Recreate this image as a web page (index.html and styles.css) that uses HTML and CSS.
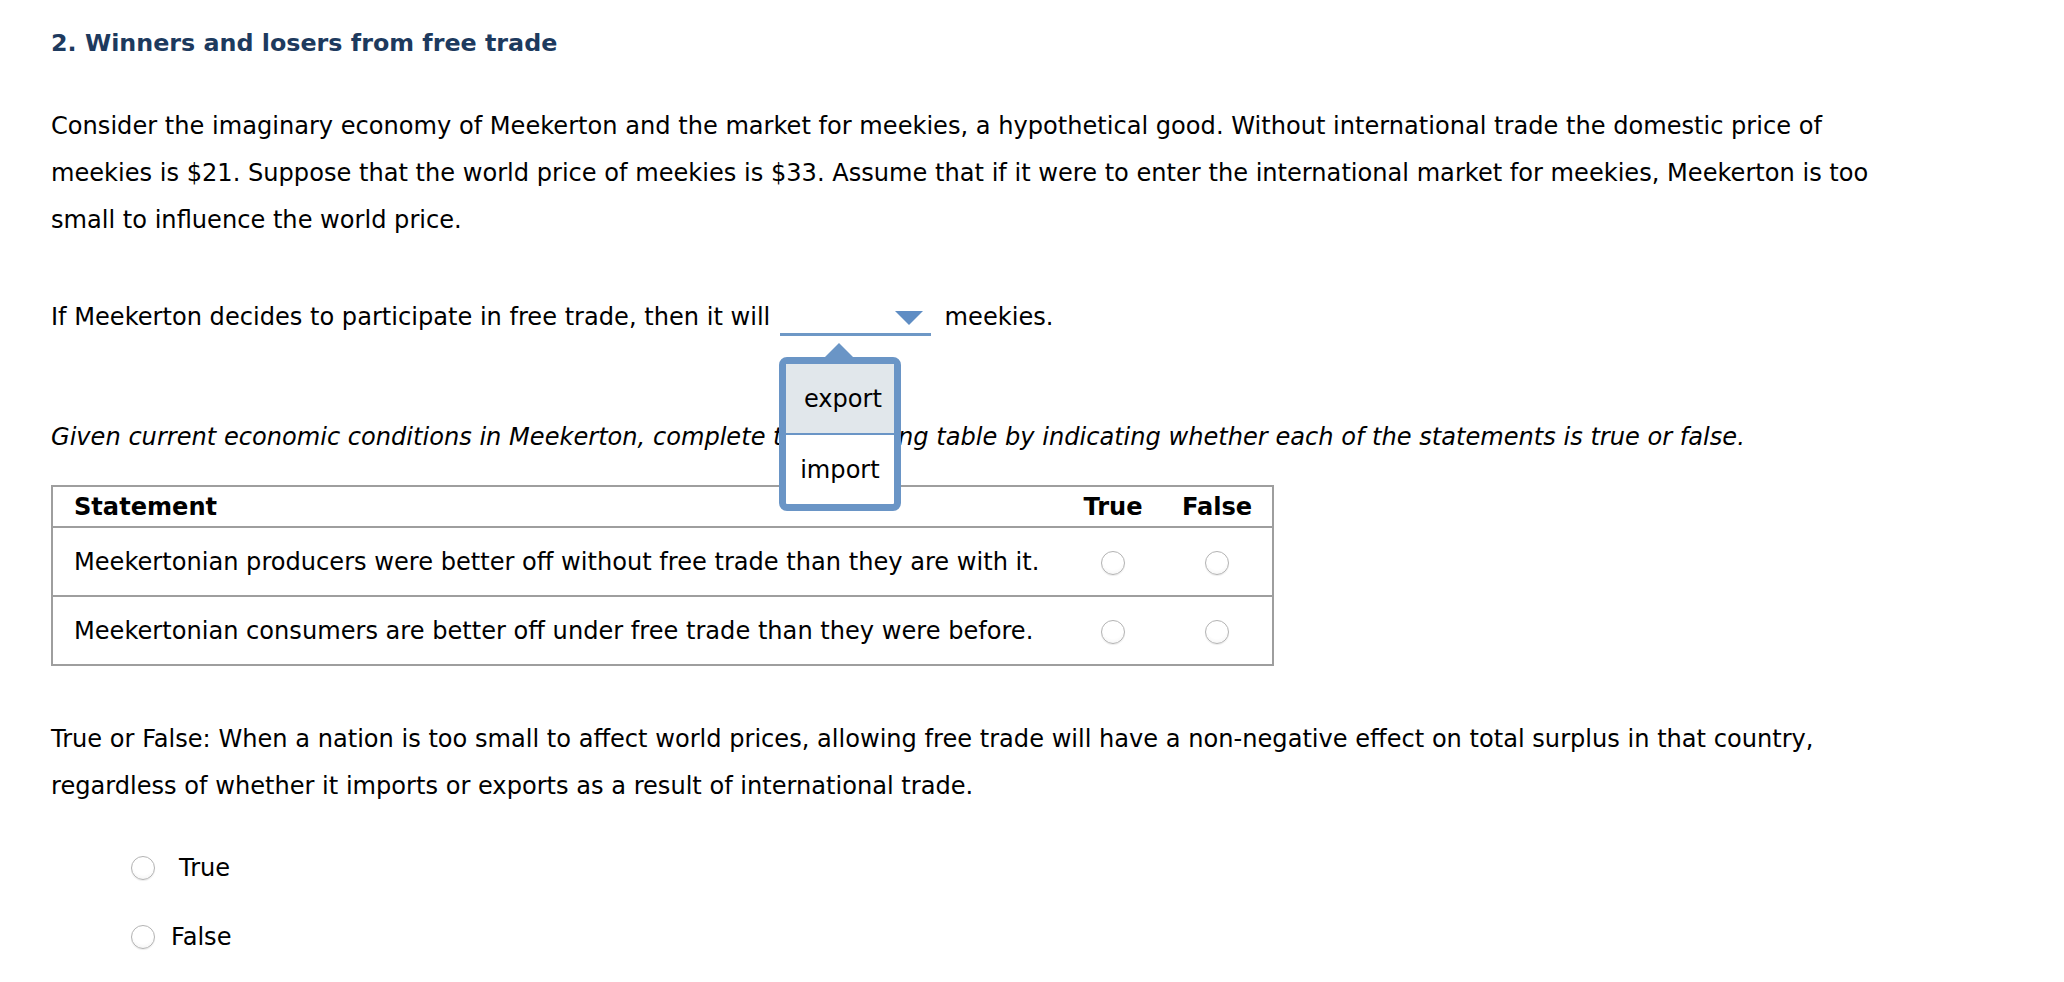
FILE: index.html
```html
<!DOCTYPE html>
<html>
<head>
<meta charset="utf-8">
<link rel="stylesheet" href="styles.css">
</head>
<body>
<div class="page">
  <h2 class="title">2. Winners and losers from free trade</h2>
  <p class="para para--intro">Consider the imaginary economy of Meekerton and the market for meekies, a hypothetical good. Without international trade the domestic price of meekies is $21. Suppose that the world price of meekies is $33. Assume that if it were to enter the international market for meekies, Meekerton is too small to influence the world price.</p>
  <p class="para para--choice">If Meekerton decides to participate in free trade, then it will <span class="dropdown"><span class="dropdown-arrow"></span><span class="menu"><span class="menu-item menu-item--active">export</span><span class="menu-item">import</span></span></span> meekies.</p>
  <p class="para para--italic">Given current economic conditions in Meekerton, complete the following table by indicating whether each of the statements is true or false.</p>
  <table class="grid">
    <thead>
      <tr><th class="col-statement">Statement</th><th class="col-true">True</th><th class="col-false">False</th></tr>
    </thead>
    <tbody>
      <tr><td class="col-statement">Meekertonian producers were better off without free trade than they are with it.</td><td class="col-true"><span class="radio"></span></td><td class="col-false"><span class="radio"></span></td></tr>
      <tr><td class="col-statement">Meekertonian consumers are better off under free trade than they were before.</td><td class="col-true"><span class="radio"></span></td><td class="col-false"><span class="radio"></span></td></tr>
    </tbody>
  </table>
  <p class="para para--tf">True or False: When a nation is too small to affect world prices, allowing free trade will have a non-negative effect on total surplus in that country, regardless of whether it imports or exports as a result of international trade.</p>
  <div class="options">
    <div class="option"><span class="radio"></span><span class="option-label option-label--true">True</span></div>
    <div class="option"><span class="radio"></span><span class="option-label">False</span></div>
  </div>
</div>
</body>
</html>
```
FILE: styles.css
```css
html, body {
  margin: 0;
  padding: 0;
  background: #ffffff;
}
body {
  font-family: "DejaVu Sans", Verdana, sans-serif;
  font-size: 24.1px;
  color: #000000;
}
.page {
  padding: 29px 0 0 51px;
  width: 1845px;
}
.title {
  margin: 0;
  font-size: 23.8px;
  line-height: 28px;
  font-weight: bold;
  color: #1d3a5e;
}
.para {
  margin: 0;
  line-height: 47px;
}
.para--intro {
  margin-top: 46px;
}
.para--choice {
  margin-top: 50px;
}
.para--italic {
  margin-top: 73px;
  font-style: italic;
}
.dropdown {
  position: relative;
  display: inline-flex;
  justify-content: flex-end;
  align-items: flex-start;
  box-sizing: border-box;
  width: 151px;
  height: 28px;
  padding: 3px 8px 0 0;
  margin: 0 6px 0 2px;
  border-bottom: 3px solid #6e98c6;
  vertical-align: baseline;
}
.dropdown-arrow {
  width: 0;
  height: 0;
  border-left: 14px solid transparent;
  border-right: 14px solid transparent;
  border-top: 14px solid #5f8dc4;
}
.menu {
  position: absolute;
  left: -1px;
  top: 49px;
  width: 122px;
  box-sizing: border-box;
  border: 7px solid #6a95c6;
  border-radius: 8px;
  background: #ffffff;
  display: flex;
  flex-direction: column;
  line-height: normal;
  z-index: 2;
}
.menu::before {
  content: "";
  position: absolute;
  top: -21px;
  left: 39px;
  width: 0;
  height: 0;
  border-left: 14px solid transparent;
  border-right: 14px solid transparent;
  border-bottom: 14px solid #6a95c6;
}
.menu-item {
  display: flex;
  align-items: center;
  justify-content: center;
  height: 69px;
  font-style: normal;
}
.menu-item--active {
  background: #e1e7eb;
  border-bottom: 2px solid #6a95c6;
  padding-left: 6px;
}
.grid {
  margin-top: 24px;
  border-collapse: collapse;
  border: 2px solid #9e9e9e;
  width: 1223px;
}
.grid th, .grid td {
  padding: 0;
  text-align: left;
  vertical-align: middle;
}
.grid thead tr {
  height: 41px;
  border-bottom: 2px solid #9e9e9e;
}
.grid tbody tr {
  height: 69px;
  border-bottom: 2px solid #9e9e9e;
}
.grid .col-statement {
  padding-left: 21px;
}
.grid .col-true {
  width: 98px;
  text-align: center;
}
.grid .col-false {
  width: 110px;
  text-align: center;
}
.grid .radio {
  vertical-align: middle;
}
.radio {
  display: inline-block;
  width: 24px;
  height: 24px;
  box-sizing: border-box;
  border-radius: 50%;
  border: 1px solid #b3b3b3;
  background: radial-gradient(circle at 50% 35%, #ffffff 0%, #ffffff 55%, #eeeeee 100%);
  box-shadow: 0 1px 1px rgba(0, 0, 0, 0.08);
}
.para--tf {
  margin-top: 50px;
}
.options {
  margin-top: 34px;
  display: flex;
  flex-direction: column;
  gap: 22px;
  padding-left: 80px;
}
.option {
  display: flex;
  align-items: center;
  height: 47px;
}
.option-label {
  margin-left: 16px;
}
.option-label--true {
  margin-left: 24px;
}
```
